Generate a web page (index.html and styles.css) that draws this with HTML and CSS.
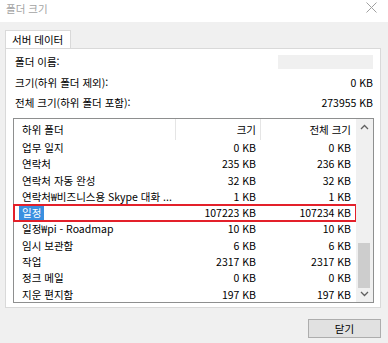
FILE: index.html
```html
<!DOCTYPE html>
<html lang="ko">
<head>
  <meta charset="UTF-8">
  <title>폴더 크기</title>
  <link rel="stylesheet" href="styles.css">
</head>
<body>

  <!-- Title bar -->
  <div class="titlebar">
    <span class="title">폴더 크기</span>
    <svg class="close-x" width="11" height="11" viewBox="0 0 11 11">
      <path d="M0.5 0.5 L10.5 10.5 M10.5 0.5 L0.5 10.5" stroke="#a0a0a0" stroke-width="1" fill="none"/>
    </svg>
  </div>

  <div class="dialog">
    <div class="tabs">
      <div class="tab">서버 데이터</div>
    </div>

    <div class="panel">
      <div class="info-row">
        <span>폴더 이름:</span>
        <span class="name-box"></span>
      </div>
      <div class="info-row">
        <span>크기(하위 폴더 제외):</span>
        <span>0 KB</span>
      </div>
      <div class="info-row">
        <span>전체 크기(하위 폴더 포함):</span>
        <span>273955 KB</span>
      </div>

      <div class="list">
        <div class="list-body">
          <div class="list-head">
            <div class="cell name">하위 폴더</div>
            <div class="cell num sep">크기</div>
            <div class="cell num sep">전체 크기</div>
          </div>
          <div id="rows"></div>
        </div>
        <div class="scrollbar">
          <svg class="arrow" width="9" height="6" viewBox="0 0 9 6">
            <path d="M1 5 L4.5 1.5 L8 5" stroke="#606060" stroke-width="1.3" fill="none"/>
          </svg>
          <div class="track">
            <div class="thumb"></div>
          </div>
          <svg class="arrow" width="9" height="6" viewBox="0 0 9 6">
            <path d="M1 1 L4.5 4.5 L8 1" stroke="#606060" stroke-width="1.3" fill="none"/>
          </svg>
        </div>
      </div>
    </div>

    <div class="footer">
      <button class="close-btn">닫기</button>
    </div>
  </div>

  <script>
    const folders = [
      { name: "업무 일지", size: "0 KB", total: "0 KB" },
      { name: "연락처", size: "235 KB", total: "236 KB" },
      { name: "연락처 자동 완성", size: "32 KB", total: "32 KB" },
      { name: "연락처₩비즈니스용 Skype 대화 ...", size: "1 KB", total: "1 KB" },
      { name: "일정", size: "107223 KB", total: "107234 KB", marked: true },
      { name: "일정₩pi - Roadmap", size: "10 KB", total: "10 KB" },
      { name: "임시 보관함", size: "6 KB", total: "6 KB" },
      { name: "작업", size: "2317 KB", total: "2317 KB" },
      { name: "정크 메일", size: "0 KB", total: "0 KB" },
      { name: "지운 편지함", size: "197 KB", total: "197 KB" }
    ];

    const rows = document.getElementById('rows');
    folders.forEach(f => {
      const row = document.createElement('div');
      row.classList.add('row');
      if (f.marked) row.classList.add('marked');

      const name = document.createElement('div');
      name.classList.add('cell', 'name');
      if (f.marked) {
        const sel = document.createElement('span');
        sel.classList.add('selected');
        sel.textContent = f.name;
        name.appendChild(sel);
      } else {
        name.textContent = f.name;
      }

      const size = document.createElement('div');
      size.classList.add('cell', 'num');
      size.textContent = f.size;

      const total = document.createElement('div');
      total.classList.add('cell', 'num');
      total.textContent = f.total;

      row.append(name, size, total);
      rows.appendChild(row);
    });
  </script>

</body>
</html>
```

FILE: styles.css
```css
body {
  margin: 0;
  width: 388px;
  height: 343px;
  overflow: hidden;
  background: #f0f0f0;
  font-family: "Noto Sans CJK KR", "Noto Sans", sans-serif;
  font-size: 10.5px;
  color: #000;
}

.titlebar {
  height: 22px;
  background: #fff;
  display: flex;
  align-items: center;
  justify-content: space-between;
  padding: 0 11px 0 6px;
}

.title {
  color: #a3a3a3;
  font-size: 10.5px;
  line-height: 18px;
  margin-top: -4px;
}

.close-x {
  margin-top: -7px;
}

.dialog {
  padding: 8px 7px 0 5px;
}

.tabs {
  display: flex;
  height: 18px;
}

.tab {
  width: 66px;
  height: 18px;
  box-sizing: border-box;
  background: #fff;
  border: 1px solid #d9d9d9;
  border-bottom: none;
  line-height: 17px;
  padding-left: 6px;
  position: relative;
  z-index: 1;
}

.panel {
  height: 260px;
  box-sizing: border-box;
  background: #fff;
  border: 1px solid #d9d9d9;
  padding: 3px 6px 0 7px;
}

.info-row {
  height: 20.5px;
  line-height: 20.5px;
  display: flex;
  justify-content: space-between;
  align-items: center;
  padding: 0 1px 0 2px;
}

.name-box {
  width: 95px;
  height: 14px;
  background: #f0f0f0;
}

.list {
  margin-top: 4.5px;
  height: 185px;
  box-sizing: border-box;
  border: 1px solid #8e8f8f;
  display: flex;
}

.list-body {
  flex: 1;
}

.list-head,
.row {
  display: grid;
  grid-template-columns: 161px 85px 95px;
}

.list-head {
  height: 21px;
  line-height: 21px;
}

.row {
  height: 16.3px;
  line-height: 16.3px;
}

.cell {
  white-space: nowrap;
  overflow: hidden;
}

.cell.name {
  padding-left: 8px;
}

.cell.num {
  text-align: right;
  padding-right: 4px;
}

.list-head .cell.num {
  padding-right: 4px;
}

.list-head .sep {
  border-left: 1px solid #e5e5e5;
}

.row.marked {
  outline: 2px solid #e3202a;
  outline-offset: -1px;
}

.selected {
  background: #3a8fe0;
  color: #fff;
  padding: 1px 3px;
  margin-left: -3px;
}

.scrollbar {
  width: 17px;
  background: #f0f0f0;
  display: flex;
  flex-direction: column;
  align-items: center;
}

.arrow {
  margin: 5px 0;
}

.track {
  flex: 1;
  width: 100%;
  position: relative;
}

.thumb {
  position: absolute;
  left: 2px;
  right: 3px;
  top: 108px;
  height: 45px;
  background: #cdcdcd;
}

.footer {
  display: flex;
  justify-content: flex-end;
  padding-top: 11px;
}

.close-btn {
  width: 73px;
  height: 19px;
  background: #e1e1e1;
  border: 1px solid #adadad;
  font-family: "Noto Sans CJK KR", "Noto Sans", sans-serif;
  font-size: 10.5px;
  line-height: 16px;
  padding: 0;
  color: #000;
}
```
